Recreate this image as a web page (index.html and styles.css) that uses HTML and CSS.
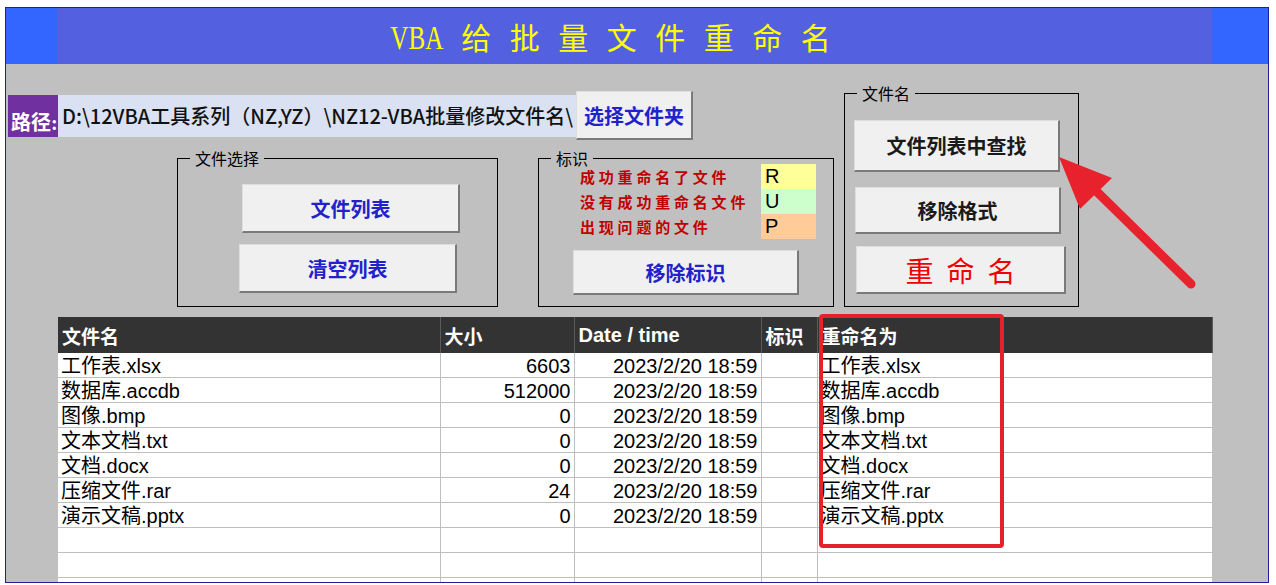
FILE: index.html
```html
<!DOCTYPE html>
<html lang="zh-CN">
<head>
    <meta charset="UTF-8">
    <meta name="viewport" content="width=device-width, initial-scale=1.0">
    <title>VBA 给批量文件重命名</title>
    <link rel="stylesheet" href="styles.css">
</head>
<body>
    <div class="frame">
        <div class="titlebar">
            <div class="title-side"></div>
            <h1 class="title"><span class="vba">VBA</span> 给 批 量 文 件 重 命 名</h1>
            <div class="title-side"></div>
        </div>

        <div class="sheet">
            <div class="controls">
                <div class="left-col">
                    <div class="path-row">
                        <div class="path-label">路径:</div>
                        <div class="path-value">D:\12VBA工具系列（NZ,YZ）\NZ12-VBA批量修改文件名\</div>
                        <button class="btn btn-blue btn-folder">选择文件夹</button>
                    </div>

                    <div class="groups-row">
                        <div class="group group-files">
                            <span class="group-title">文件选择</span>
                            <button class="btn btn-blue btn-list">文件列表</button>
                            <button class="btn btn-blue btn-clear">清空列表</button>
                        </div>

                        <div class="group group-marks">
                            <span class="group-title">标识</span>
                            <div class="marks">
                                <div class="mark-row"><span class="mark-text">成功重命名了文件</span><span class="mark-code code-r">R</span></div>
                                <div class="mark-row"><span class="mark-text">没有成功重命名文件</span><span class="mark-code code-u">U</span></div>
                                <div class="mark-row"><span class="mark-text">出现问题的文件</span><span class="mark-code code-p">P</span></div>
                            </div>
                            <button class="btn btn-blue btn-unmark">移除标识</button>
                        </div>
                    </div>
                </div>

                <div class="group group-name">
                    <span class="group-title">文件名</span>
                    <button class="btn btn-dark btn-find">文件列表中查找</button>
                    <button class="btn btn-dark btn-format">移除格式</button>
                    <button class="btn btn-rename">重 命 名</button>
                </div>
            </div>

            <table class="files">
                <colgroup>
                    <col class="c-name"><col class="c-size"><col class="c-date"><col class="c-mark"><col class="c-new">
                </colgroup>
                <thead>
                    <tr>
                        <th>文件名</th>
                        <th>大小</th>
                        <th class="th-latin">Date / time</th>
                        <th>标识</th>
                        <th>重命名为</th>
                    </tr>
                </thead>
                <tbody>
                    <tr><td>工作表.xlsx</td><td class="num">6603</td><td class="num">2023/2/20 18:59</td><td></td><td>工作表.xlsx</td></tr>
                    <tr><td>数据库.accdb</td><td class="num">512000</td><td class="num">2023/2/20 18:59</td><td></td><td>数据库.accdb</td></tr>
                    <tr><td>图像.bmp</td><td class="num">0</td><td class="num">2023/2/20 18:59</td><td></td><td>图像.bmp</td></tr>
                    <tr><td>文本文档.txt</td><td class="num">0</td><td class="num">2023/2/20 18:59</td><td></td><td>文本文档.txt</td></tr>
                    <tr><td>文档.docx</td><td class="num">0</td><td class="num">2023/2/20 18:59</td><td></td><td>文档.docx</td></tr>
                    <tr><td>压缩文件.rar</td><td class="num">24</td><td class="num">2023/2/20 18:59</td><td></td><td>压缩文件.rar</td></tr>
                    <tr><td>演示文稿.pptx</td><td class="num">0</td><td class="num">2023/2/20 18:59</td><td></td><td>演示文稿.pptx</td></tr>
                    <tr><td></td><td></td><td></td><td></td><td></td></tr>
                    <tr><td></td><td></td><td></td><td></td><td></td></tr>
                    <tr><td></td><td></td><td></td><td></td><td></td></tr>
                </tbody>
            </table>
        </div>

        <!-- callouts drawn over the sheet -->
        <div class="highlight"></div>
        <svg class="arrow" viewBox="1050 150 150 145" width="150" height="145">
            <line x1="1191" y1="284" x2="1088" y2="183" stroke="#e8222c" stroke-width="9" stroke-linecap="round"/>
            <polygon points="1059,157 1112,178 1080,209" fill="#e8222c"/>
        </svg>
    </div>
</body>
</html>
```

FILE: styles.css
```css
body {
    margin: 0;
    background-color: #fff;
    font-family: "Liberation Sans", "Noto Sans CJK SC", sans-serif;
}
.frame {
    position: relative;
    margin: 7px 0 0 5px;
    width: 1262px;
    height: 574px;
    border: 1px solid #1f1f99;
    overflow: hidden;
}
.titlebar {
    display: grid;
    grid-template-columns: 51px 1fr 56px;
    height: 56px;
    background-color: #5360e0;
}
.title-side {
    background-color: #3366ff;
}
.title {
    margin: 0;
    padding: 5px 48px 0 0;
    text-align: center;
    font-family: "Liberation Serif", "Noto Sans CJK SC", serif;
    font-weight: normal;
    font-size: 30px;
    line-height: 51px;
    word-spacing: 11px;
    color: #ffff00;
}
.vba {
    display: inline-block;
    font-size: 33px;
    transform: scaleX(0.76);
    margin: 0 -9px 0 -8px;
}
.sheet {
    height: 518px;
    background-color: #c0c0c0;
    overflow: hidden;
}
.controls {
    display: flex;
    height: 253px;
    padding-top: 27px;
    box-sizing: border-box;
}
.left-col {
    width: 828px;
    padding-left: 2px;
    box-sizing: border-box;
}
.path-row {
    display: flex;
    align-items: center;
    height: 49px;
}
.path-label {
    width: 50px;
    height: 42px;
    box-sizing: border-box;
    padding: 0 0 1px 3px;
    display: flex;
    align-items: flex-end;
    background-color: #7030a0;
    color: #fff;
    font-family: "Liberation Serif", "Noto Sans CJK SC", serif;
    font-weight: bold;
    font-size: 20px;
    white-space: nowrap;
    overflow: hidden;
}
.path-value {
    width: 518px;
    height: 42px;
    box-sizing: border-box;
    padding-left: 4px;
    background-color: #d9e1f2;
    font-family: "Noto Sans CJK SC", sans-serif;
    font-weight: 500;
    font-size: 20px;
    line-height: 42px;
    white-space: nowrap;
    overflow: hidden;
    color: #111;
}
.btn {
    display: block;
    padding: 0;
    box-sizing: border-box;
    background-color: #f0f0f0;
    border: 1px solid #dedede;
    border-right: 2px solid #7a7a7a;
    border-bottom: 2px solid #7a7a7a;
    font-family: "Noto Sans CJK SC", serif;
    font-weight: bold;
    font-size: 20px;
}
.btn-blue {
    color: #2222cc;
}
.btn-dark {
    color: #1a1a1a;
}
.btn-folder {
    width: 117px;
    height: 49px;
}
.groups-row {
    display: flex;
    gap: 40px;
    margin: 18px 0 0 169px;
}
.group {
    position: relative;
    box-sizing: border-box;
    border: 1px solid #000;
}
.group-title {
    position: absolute;
    top: -12px;
    left: 12px;
    padding: 0 5px;
    background-color: #c0c0c0;
    font-family: "Noto Sans CJK SC", sans-serif;
    font-size: 16px;
    line-height: 22px;
    color: #000;
}
.group-files {
    width: 321px;
    height: 149px;
    padding-top: 25px;
}
.btn-list {
    width: 218px;
    height: 49px;
    margin-left: 64px;
}
.btn-clear {
    width: 218px;
    height: 49px;
    margin: 11px 0 0 61px;
}
.group-marks {
    width: 296px;
    height: 149px;
    padding-top: 5px;
}
.mark-row {
    display: flex;
    height: 25px;
}
.mark-text {
    width: 181px;
    margin-left: 41px;
    font-family: "Noto Sans CJK SC", serif;
    font-weight: bold;
    font-size: 15px;
    line-height: 25px;
    letter-spacing: 3.8px;
    color: #c00000;
    white-space: nowrap;
}
.mark-code {
    width: 55px;
    padding-left: 4px;
    box-sizing: border-box;
    font-size: 20px;
    line-height: 25px;
    color: #000;
}
.code-r {
    background-color: #ffff99;
}
.code-u {
    background-color: #ccffcc;
}
.code-p {
    background-color: #ffcc99;
}
.btn-unmark {
    width: 226px;
    height: 45px;
    margin: 11px 0 0 34px;
}
.group-name {
    width: 235px;
    height: 214px;
    margin: 2px 0 0 10px;
    padding-top: 26px;
}
.btn-find {
    width: 206px;
    height: 52px;
    margin-left: 9px;
}
.btn-format {
    width: 206px;
    height: 47px;
    margin: 15px 0 0 10px;
}
.btn-rename {
    width: 210px;
    height: 48px;
    margin: 12px 0 0 11px;
    font-family: "Liberation Serif", "Noto Sans CJK SC", serif;
    font-weight: normal;
    font-size: 28px;
    word-spacing: 6px;
    color: #ee0000;
}
.files {
    margin-left: 52px;
    width: 1154px;
    table-layout: fixed;
    border-collapse: collapse;
    background-color: #fff;
}
.c-name { width: 382px; }
.c-size { width: 134px; }
.c-date { width: 187px; }
.c-mark { width: 56px; }
.c-new { width: 395px; }
.files th {
    height: 36px;
    padding: 0 4px;
    background-color: #333;
    border-right: 1px solid #5a5a5a;
    color: #fff;
    text-align: left;
    font-family: "Noto Sans CJK SC", serif;
    font-weight: bold;
    font-size: 19px;
}
.files th.th-latin {
    font-family: "Liberation Sans", sans-serif;
    font-size: 20px;
}
.files td {
    height: 24px;
    padding: 0 3px;
    border-right: 1px solid #bfbfbf;
    border-bottom: 1px solid #bfbfbf;
    font-size: 20px;
    line-height: 22px;
    vertical-align: bottom;
    white-space: nowrap;
    overflow: hidden;
    color: #000;
}
.files td.num {
    text-align: right;
}
.highlight {
    position: absolute;
    left: 813px;
    top: 306px;
    width: 185px;
    height: 234px;
    box-sizing: border-box;
    border: 4px solid #e5222c;
    border-radius: 4px;
}
.arrow {
    position: absolute;
    left: 1044px;
    top: 142px;
}
```
